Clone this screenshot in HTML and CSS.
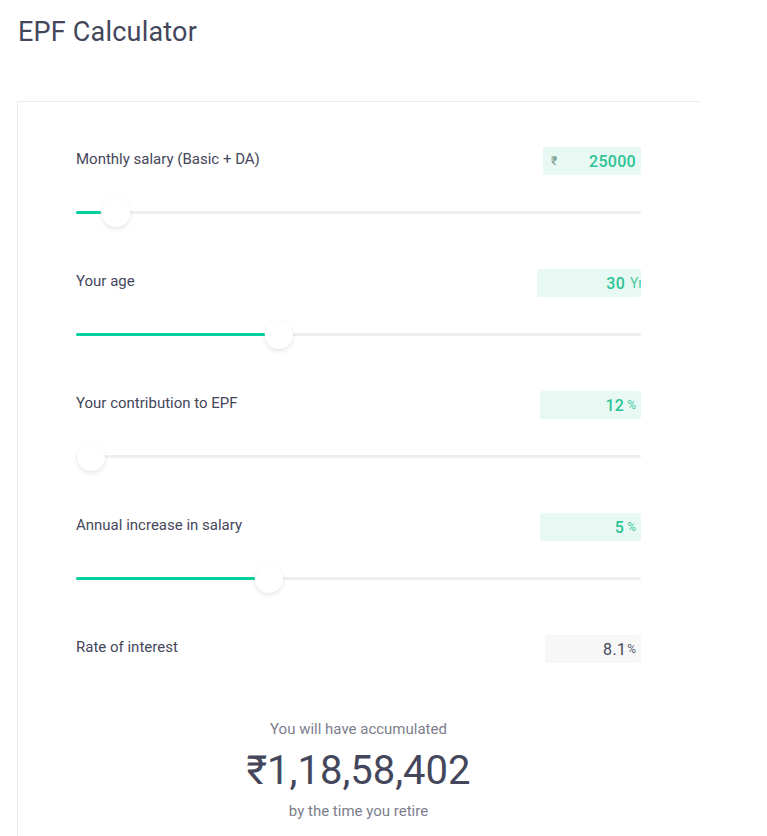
FILE: index.html
```html
<!DOCTYPE html>
<html>
<head>
<meta charset="utf-8">
<title>EPF Calculator</title>
<link rel="stylesheet" href="styles.css">
</head>
<body>
<h1 class="title">EPF Calculator</h1>
<div class="card">
  <div class="row">
    <div class="head">
      <span class="label">Monthly salary (Basic + DA)</span>
      <div class="val green w98"><span class="pre">₹</span><span class="num">25000</span></div>
    </div>
    <div class="slider">
      <div class="track"><div class="fill" style="width:25px"></div><div class="thumb" style="left:40px"></div></div>
    </div>
  </div>
  <div class="row">
    <div class="head">
      <span class="label">Your age</span>
      <div class="val green w104 clip"><span class="num">30</span><span class="unit yr">Yr</span></div>
    </div>
    <div class="slider">
      <div class="track"><div class="fill" style="width:189px"></div><div class="thumb" style="left:203px"></div></div>
    </div>
  </div>
  <div class="row">
    <div class="head">
      <span class="label">Your contribution to EPF</span>
      <div class="val green w101"><span class="num">12</span><span class="unit">%</span></div>
    </div>
    <div class="slider">
      <div class="track"><div class="fill" style="width:0px"></div><div class="thumb" style="left:15px"></div></div>
    </div>
  </div>
  <div class="row">
    <div class="head">
      <span class="label">Annual increase in salary</span>
      <div class="val green w101"><span class="num">5</span><span class="unit">%</span></div>
    </div>
    <div class="slider">
      <div class="track"><div class="fill" style="width:179px"></div><div class="thumb" style="left:193px"></div></div>
    </div>
  </div>
  <div class="row last">
    <div class="head">
      <span class="label">Rate of interest</span>
      <div class="val gray w96"><span class="num plain">8.1</span><span class="unit tight">%</span></div>
    </div>
  </div>
  <div class="result">
    <div class="sub">You will have accumulated</div>
    <div class="amount">₹1,18,58,402</div>
    <div class="sub sub2">by the time you retire</div>
  </div>
</div>
</body>
</html>
```
FILE: styles.css
```css
html, body {
  margin: 0;
  padding: 0;
  background: #ffffff;
  font-family: Roboto, "Liberation Sans", Arial, sans-serif;
  color: #44475b;
}
.title {
  margin: 0;
  padding: 17px 0 0 18px;
  font-size: 27px;
  line-height: 30px;
  font-weight: 400;
  letter-spacing: 0.2px;
  color: #44475b;
}
.card {
  margin: 54px 0 0 17px;
  width: 683px;
  border-top: 1px solid #ececec;
  border-left: 1px solid #ececec;
  padding: 45px 0 30px 58px;
  box-sizing: border-box;
}
.row {
  width: 565px;
  margin-bottom: 43px;
}
.row.last {
  margin-bottom: 56px;
}
.head {
  display: flex;
  align-items: center;
  justify-content: space-between;
  height: 28px;
}
.label {
  font-size: 15px;
  line-height: 20px;
  color: #44475b;
  margin-top: -4px;
}
.val {
  height: 28px;
  display: flex;
  align-items: center;
  justify-content: flex-end;
  padding-right: 5px;
  box-sizing: border-box;
  border-radius: 2px;
  overflow: hidden;
  white-space: nowrap;
}
.val.green {
  background: #e7f9f2;
  color: #2cc495;
}
.val.gray {
  background: #f7f7f7;
  color: #44475b;
}
.w98 { width: 98px; justify-content: space-between; padding-left: 8px; }
.w104 { width: 104px; }
.w101 { width: 101px; }
.w96 { width: 96px; }
.clip { padding-right: 0; }
.pre {
  font-size: 12px;
  color: #6a8f80;
}
.num {
  font-size: 16px;
  font-weight: 500;
  letter-spacing: 0.3px;
}
.num.plain {
  font-weight: 400;
}
.unit {
  font-size: 12px;
  margin-left: 3px;
  opacity: 0.85;
}
.unit.tight {
  margin-left: 1px;
}
.unit.yr {
  font-size: 14px;
  margin-left: 5px;
  margin-right: -2px;
}
.slider {
  margin-top: 23px;
  height: 28px;
  display: flex;
  align-items: center;
}
.track {
  position: relative;
  width: 100%;
  height: 3px;
  background: #eeeeee;
  border-radius: 2px;
}
.fill {
  height: 3px;
  background: #00d09c;
  border-radius: 2px;
}
.thumb {
  position: absolute;
  top: 50%;
  width: 28px;
  height: 28px;
  margin: -13px 0 0 -14px;
  border-radius: 50%;
  background: #ffffff;
  box-shadow: 0 2px 5px rgba(0, 0, 0, 0.1);
}
.result {
  width: 565px;
  text-align: center;
}
.sub {
  font-size: 15px;
  line-height: 20px;
  color: #7c7e8c;
}
.amount {
  margin-top: 10px;
  font-size: 40px;
  line-height: 44px;
  font-weight: 400;
  color: #44475b;
}
.sub2 {
  margin-top: 8px;
}
```
